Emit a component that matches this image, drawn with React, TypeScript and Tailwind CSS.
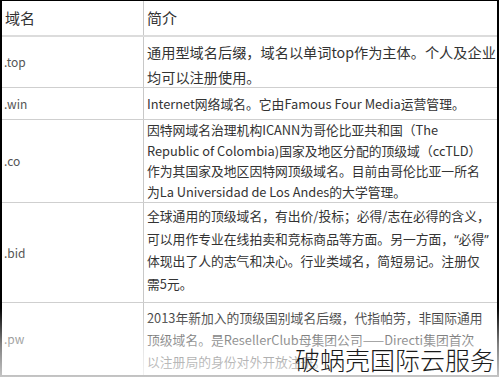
import type { ReactNode } from "react";

const q = (s: string) => <span className="font-['Open_Sans',sans-serif]">{s}</span>;

const rows: {
  name: string;
  h: string;
  body: string;
  lines: ReactNode[];
}[] = [
  {
    name: ".top",
    h: "h-[51px]",
    body: "pt-[3px] leading-[25px] text-[14.2px]",
    lines: ["通用型域名后缀，域名以单词top作为主体。个人及企业", "均可以注册使用。"],
  },
  {
    name: ".win",
    h: "h-[32px]",
    body: "flex flex-col justify-center pt-[1px] leading-[22px] text-[12.8px]",
    lines: ["Internet网络域名。它由Famous Four Media运营管理。"],
  },
  {
    name: ".co",
    h: "h-[83px]",
    body: "leading-[20.6px] text-[12.8px]",
    lines: [
      "因特网域名治理机构ICANN为哥伦比亚共和国（The",
      "Republic of Colombia)国家及地区分配的顶级域（ccTLD）",
      "作为其国家及地区因特网顶级域名。目前由哥伦比亚一所名",
      "为La Universidad de Los Andes的大学管理。",
    ],
  },
  {
    name: ".bid",
    h: "h-[100px]",
    body: "pt-[2px] leading-[22.5px] text-[12.8px]",
    lines: [
      "全球通用的顶级域名，有出价/投标；必得/志在必得的含义，",
      <>
        可以用作专业在线拍卖和竞标商品等方面。另一方面，{q("“")}必得{q("”")}
      </>,
      "体现出了人的志气和决心。行业类域名，简短易记。注册仅",
      "需5元。",
    ],
  },
];

export default function App() {
  return (
    <div className="relative w-[499px] h-[380px] overflow-hidden bg-white font-['Noto_Sans_CJK_SC',sans-serif] text-[#333]">
      <div className="flex flex-col h-[377px] border-t border-l-2 border-r-2 border-b-2 border-black">
        <div className="flex h-[36px] shrink-0 border-b-2 border-[#dcdcdc] text-[15px]">
          <div className="w-[142px] shrink-0 border-r border-[#c8c8c8] pl-[3px] flex items-center">域名</div>
          <div className="flex-1 pl-[3px] flex items-center">简介</div>
        </div>

        {rows.map((r) => (
          <div key={r.name} className={`flex ${r.h} shrink-0 border-b border-[#cfcfcf]`}>
            <div className="w-[142px] shrink-0 border-r border-[#c8c8c8] pl-[2px] flex items-center text-[12px] text-[#555]">
              {r.name}
            </div>
            <div className={`flex-1 min-w-0 pl-[3px] ${r.body}`}>
              {r.lines.map((l, i) => (
                <div key={i} className="whitespace-nowrap">
                  {l}
                </div>
              ))}
            </div>
          </div>
        ))}

        <div className="flex flex-1">
          <div className="w-[142px] shrink-0 border-r border-[#c8c8c8] pl-[2px] flex items-center text-[12px] text-[#555]">
            .pw
          </div>
          <div className="flex-1 min-w-0 pl-[3px] pt-[4px] leading-[22px] text-[12.8px]">
            <div className="whitespace-nowrap">2013年新加入的顶级国别域名后缀，代指帕劳，非国际通用</div>
            <div className="whitespace-nowrap">顶级域名。是ResellerClub母集团公司——Directi集团首次</div>
            <div className="whitespace-nowrap">以注册局的身份对外开放注册。</div>
          </div>
        </div>
      </div>

      {/* fade at the bottom of the screenshot */}
      <div className="absolute inset-x-0 bottom-0 h-[72px] bg-gradient-to-b from-white/0 via-white/50 to-white/80" />

      {/* watermark */}
      <div className="absolute right-[4px] bottom-[6px] text-[25px] leading-[30px] font-light text-[#1a1a1a]">
        破蜗壳国际云服务
      </div>
    </div>
  );
}
